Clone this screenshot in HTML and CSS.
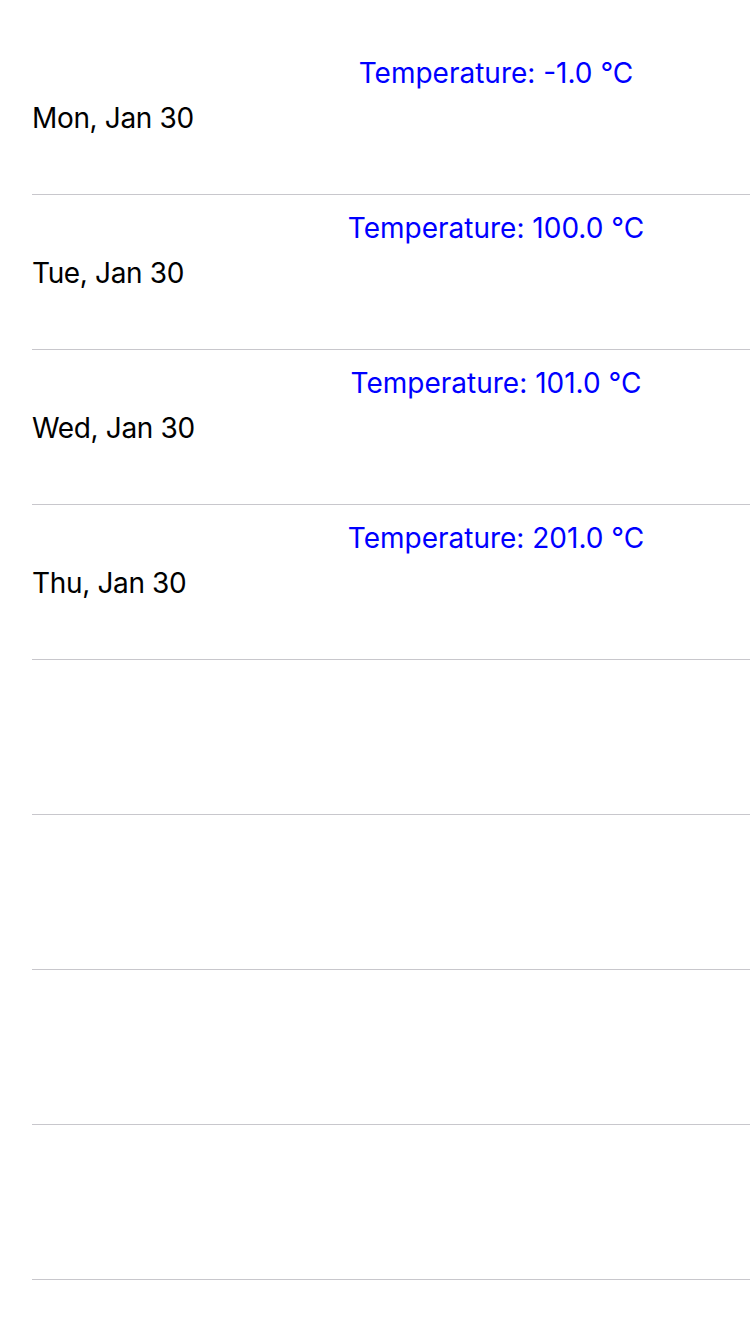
FILE: index.html
```html
<!DOCTYPE html>
<html>
<head>
<meta charset="utf-8">
<link rel="stylesheet" href="styles.css">
</head>
<body>
<div class="list">
  <div class="row"><div class="temp">Temperature: -1.0 °C</div><div class="date">Mon, Jan 30</div></div>
  <div class="row"><div class="temp">Temperature: 100.0 °C</div><div class="date">Tue, Jan 30</div></div>
  <div class="row"><div class="temp">Temperature: 101.0 °C</div><div class="date">Wed, Jan 30</div></div>
  <div class="row"><div class="temp">Temperature: 201.0 °C</div><div class="date">Thu, Jan 30</div></div>
  <div class="row"></div>
  <div class="row"></div>
  <div class="row"></div>
  <div class="row"></div>
</div>
</body>
</html>
```
FILE: styles.css
```css
html, body {
  margin: 0;
  padding: 0;
  background: #ffffff;
}
body {
  font-family: Inter, "Liberation Sans", sans-serif;
  -webkit-font-smoothing: antialiased;
}
.list {
  padding-top: 40px;
}
.row {
  margin-left: 32px;
  height: 154px;
  border-bottom: 1px solid #c8c7cc;
  display: flex;
  flex-direction: column;
}
.temp {
  padding-left: 210px;
  text-align: center;
  color: #0000ff;
  font-size: 28px;
  line-height: 34px;
  margin-top: 16px;
}
.date {
  color: #000000;
  font-size: 28px;
  line-height: 34px;
  margin-top: 11px;
  letter-spacing: -0.35px;
}
```
